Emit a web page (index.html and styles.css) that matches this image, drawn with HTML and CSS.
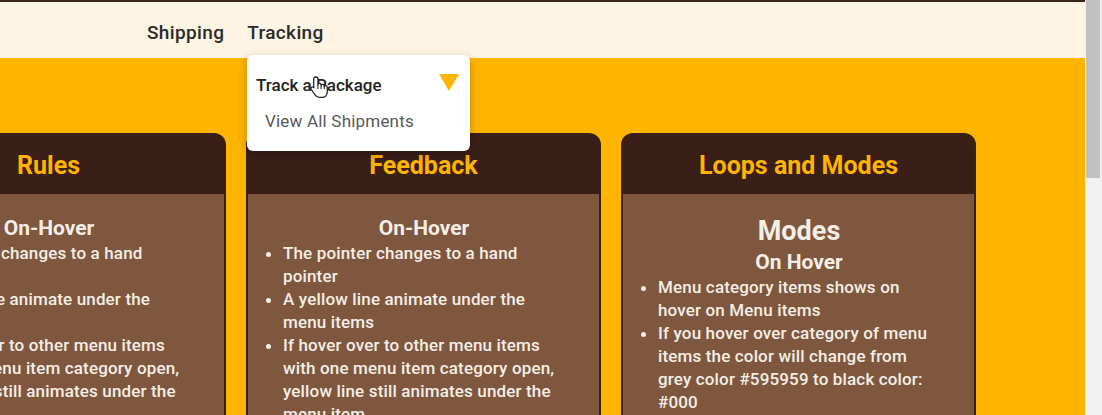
FILE: index.html
```html
<!DOCTYPE html>
<html lang="en">
<head>
<meta charset="utf-8">
<title>Menu Notes</title>
<link rel="stylesheet" href="styles.css">
</head>
<body>
<div class="page">
  <header class="topbar">
    <nav class="nav">
      <a class="nav-item">Shipping</a>
      <a class="nav-item">Tracking</a>
    </nav>
    <div class="dropdown">
      <div class="dd-row dd-active">
        <span>Track a Package</span>
        <span class="dd-caret"></span>
      </div>
      <div class="dd-row dd-sub">View All Shipments</div>
      <svg class="cursor" width="21" height="25" viewBox="0 0 20 23">
        <path d="M6.5 1.5 C7.6 1.5 8.5 2.3 8.5 3.5 V9 C8.5 8 9.3 7.5 10 7.5 C10.8 7.5 11.5 8 11.5 9 V9.8 C11.5 9 12.2 8.5 13 8.5 C13.8 8.5 14.5 9 14.5 10 V10.8 C14.5 10 15.2 9.6 15.9 9.6 C16.7 9.6 17.4 10.2 17.4 11.2 V15.5 C17.4 18.5 15.5 21 12.5 21 H10 C8 21 6.8 20 5.8 18.5 L2.2 13.5 C1.6 12.6 1.9 11.6 2.7 11.2 C3.4 10.8 4.2 11 4.7 11.7 L4.5 11.5 V3.5 C4.5 2.3 5.4 1.5 6.5 1.5 Z" fill="#fff" stroke="#222" stroke-width="1.2" stroke-linejoin="round"/>
        <path d="M8.5 9 V13 M11.5 9.8 V13 M14.5 10.8 V13" stroke="#222" stroke-width="1"/>
      </svg>
    </div>
  </header>
  <main class="stage">
    <div class="cards">
      <section class="card">
        <h2 class="card-title">Rules</h2>
        <div class="card-body">
          <h3 class="sub">On-Hover</h3>
          <ul class="notes">
            <li>The pointer changes to a hand pointer</li>
            <li>A yellow line animate under the menu items</li>
            <li>If hover over to other menu items with one menu item category open, yellow line still animates under the menu item</li>
          </ul>
        </div>
      </section>
      <section class="card">
        <h2 class="card-title">Feedback</h2>
        <div class="card-body">
          <h3 class="sub">On-Hover</h3>
          <ul class="notes">
            <li>The pointer changes to a hand pointer</li>
            <li>A yellow line animate under the menu items</li>
            <li>If hover over to other menu items with one menu item category open, yellow line still animates under the menu item</li>
          </ul>
        </div>
      </section>
      <section class="card">
        <h2 class="card-title">Loops and Modes</h2>
        <div class="card-body">
          <h2 class="mode">Modes</h2>
          <h3 class="sub">On Hover</h3>
          <ul class="notes">
            <li>Menu category items shows on hover on Menu items</li>
            <li>If you hover over category of menu items the color will change from grey color #595959 to black color: #000</li>
          </ul>
        </div>
      </section>
    </div>
  </main>
</div>
<div class="scrollbar"><div class="thumb"></div></div>
</body>
</html>
```

FILE: styles.css
```css
html, body {
  margin: 0;
  height: 100%;
}
body {
  display: flex;
  overflow: hidden;
  font-family: Roboto, "Liberation Sans", sans-serif;
  background: #f1f1f1;
}
.page {
  flex: 1;
  display: flex;
  flex-direction: column;
  min-width: 0;
  background: #ffb400;
  border-top: 2px solid #3a231a;
  overflow: hidden;
}
.topbar {
  position: relative;
  height: 56px;
  background: #fdf4e4;
  flex: none;
  z-index: 2;
}
.nav {
  display: flex;
  gap: 23px;
  padding-left: 147px;
  height: 100%;
  align-items: center;
}
.nav-item {
  font-size: 19px;
  font-weight: 500;
  letter-spacing: 0.35px;
  color: #2a2a2a;
  margin-top: 4px;
}
.dropdown {
  position: absolute;
  left: 247px;
  top: 53px;
  width: 223px;
  height: 96px;
  background: #fff;
  border-radius: 6px;
  box-shadow: 0 3px 10px rgba(0, 0, 0, 0.25);
  box-sizing: border-box;
  padding: 13px 11px 0 9px;
}
.dd-row {
  display: flex;
  align-items: center;
  justify-content: space-between;
}
.dd-active {
  height: 34px;
  font-size: 17px;
  font-weight: 500;
  color: #222;
}
.dd-caret {
  width: 0;
  height: 0;
  border-left: 10px solid transparent;
  border-right: 10px solid transparent;
  border-top: 17px solid #ffb400;
  margin-top: -6px;
}
.dd-sub {
  padding-left: 9px;
  height: 38px;
  font-size: 17px;
  letter-spacing: 0.2px;
  color: #595959;
}
.cursor {
  position: absolute;
  left: 62px;
  top: 20px;
}
.stage {
  flex: 1;
  padding-top: 75px;
  display: flex;
  flex-direction: column;
}
.cards {
  flex: 1;
  display: flex;
  gap: 20px;
  margin-left: -129px;
}
.card {
  flex: none;
  width: 355px;
  box-sizing: border-box;
  background: #3a1f16;
  border-radius: 12px 12px 0 0;
  padding: 0 2px;
  display: flex;
  flex-direction: column;
}
.card-title {
  flex: none;
  margin: 0;
  height: 61px;
  box-sizing: border-box;
  padding-top: 3px;
  display: flex;
  align-items: center;
  justify-content: center;
  font-size: 25px;
  font-weight: 700;
  color: #ffb400;
}
.card-body {
  flex: 1;
  background: #7e573e;
  padding: 20px 34px 0 35px;
  color: #f5eee6;
}
.sub {
  margin: 0;
  text-align: center;
  font-size: 21px;
  line-height: 28px;
  font-weight: 700;
}
.mode {
  margin: 0;
  text-align: center;
  font-size: 27px;
  line-height: 34px;
  font-weight: 700;
}
.notes {
  margin: 0;
  padding: 0;
  font-size: 17px;
  font-weight: 500;
  letter-spacing: 0.15px;
  line-height: 23px;
}
.notes li {
  margin: 0;
}
.scrollbar {
  flex: none;
  width: 17px;
  background: #f1f1f1;
}
.thumb {
  margin-left: 1px;
  width: 14px;
  height: 178px;
  background: #c1c1c1;
}
```
